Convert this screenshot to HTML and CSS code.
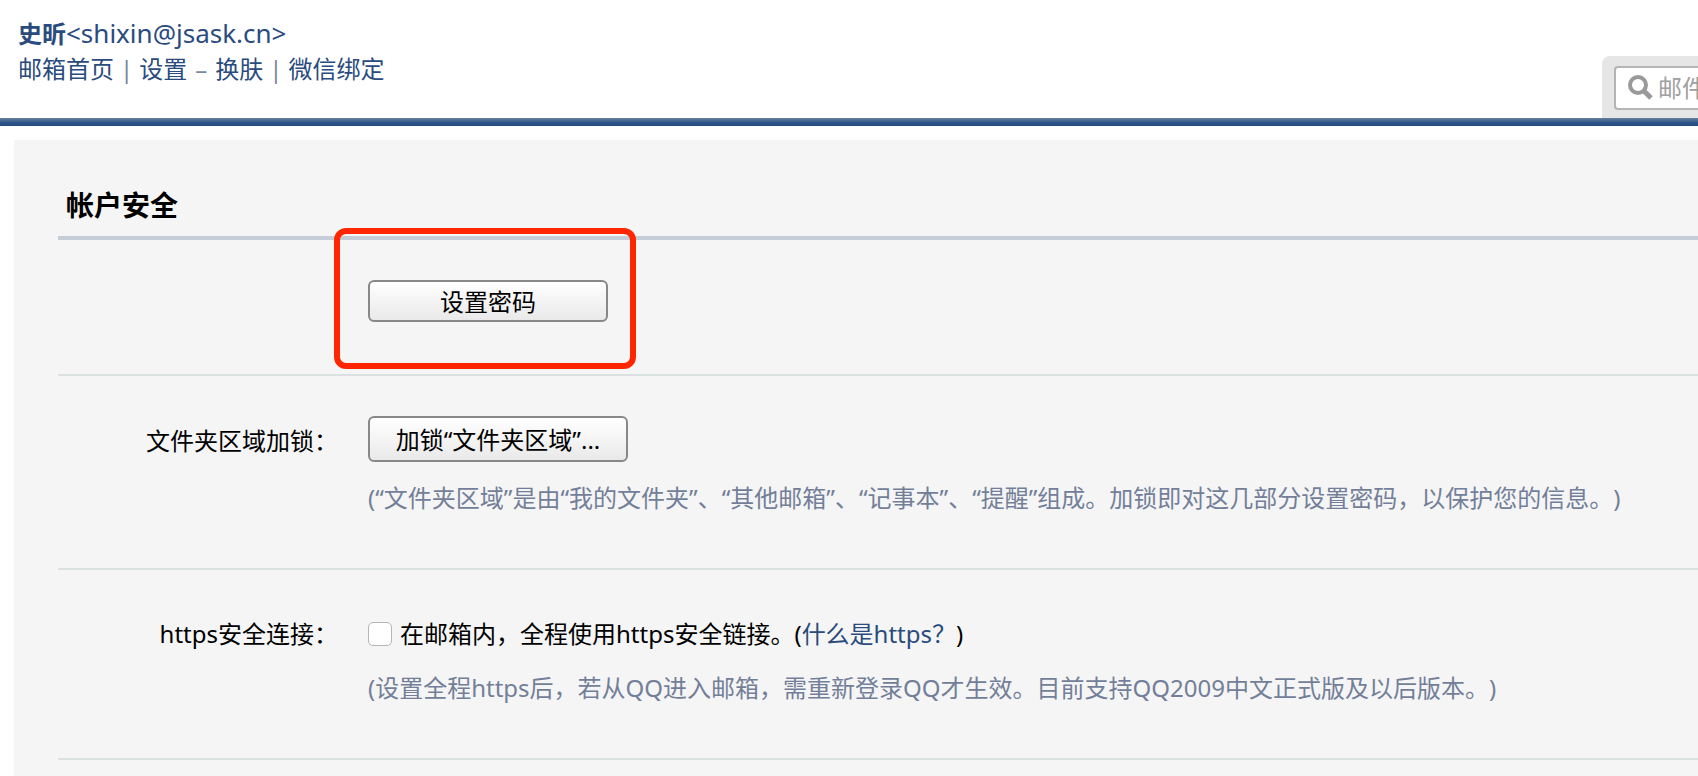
FILE: index.html
```
<!DOCTYPE html>
<html lang="zh-CN">
<head>
    <meta charset="UTF-8">
    <title>帐户安全</title>
    <link rel="stylesheet" href="styles.css">
</head>
<body>
    <header class="header">
        <div class="account">
            <div class="user"><b>史昕</b><span class="email">&lt;shixin@jsask.cn&gt;</span></div>
            <nav class="nav">
                <a href="#">邮箱首页</a>
                <span class="sep">|</span>
                <a href="#">设置</a>
                <span class="sep dash">–</span>
                <a href="#">换肤</a>
                <span class="sep">|</span>
                <a href="#">微信绑定</a>
            </nav>
        </div>
        <form class="search">
            <div class="search-box">
                <svg class="search-icon" width="26" height="26" viewBox="0 0 26 26">
                    <circle cx="10" cy="10" r="8" fill="none" stroke="#999" stroke-width="4"/>
                    <path d="M16 16L23 23" stroke="#999" stroke-width="5"/>
                </svg>
                <input type="text" class="search-input" placeholder="邮件" aria-label="邮件">
            </div>
        </form>
    </header>

    <main class="panel">
        <h1 class="title">帐户安全</h1>

        <section class="row">
            <div class="label"></div>
            <div class="content">
                <div class="marked">
                    <button type="button" class="btn btn-password">设置密码</button>
                </div>
            </div>
        </section>

        <section class="row">
            <div class="label">文件夹区域加锁：</div>
            <div class="content">
                <button type="button" class="btn btn-lock">加锁“文件夹区域”...</button>
                <p class="tip">(“文件夹区域”是由“我的文件夹”、“其他邮箱”、“记事本”、“提醒”组成。加锁即对这几部分设置密码，以保护您的信息。)</p>
            </div>
        </section>

        <section class="row row-https">
            <div class="label">https安全连接：</div>
            <div class="content">
                <div class="option">
                    <input type="checkbox" id="https" class="check">
                    <label for="https">在邮箱内，全程使用https安全链接。</label>(<a href="#">什么是https？</a>)
                </div>
                <p class="tip">(设置全程https后，若从QQ进入邮箱，需重新登录QQ才生效。目前支持QQ2009中文正式版及以后版本。)</p>
            </div>
        </section>
    </main>
</body>
</html>
```
FILE: styles.css
```
* {
    box-sizing: border-box;
}
body {
    margin: 0;
    font-family: "Noto Sans", "Noto Sans CJK SC", sans-serif;
    font-size: 24px;
    line-height: 36px;
    text-spacing-trim: space-all;
    color: #000;
    background: #fff;
    display: flex;
    flex-direction: column;
    min-height: 100vh;
}
a {
    color: #2a4b7d;
    text-decoration: none;
}

/* header */
.header {
    display: flex;
    justify-content: space-between;
    align-items: flex-end;
    position: relative;
    padding-bottom: 8px;
}
.header::after {
    content: "";
    position: absolute;
    left: 0;
    right: 0;
    bottom: 0;
    height: 8px;
    background: linear-gradient(#67809f, #2b5486 60%, #254d80);
}
.account {
    padding: 15px 0 31px 18px;
    color: #2a4b7d;
}
.user {
    height: 36px;
}
.email {
    font-size: 26px;
}
.nav {
    display: flex;
    gap: 6px;
}
.sep {
    color: #7a869f;
}
.dash {
    padding: 0 2px;
}
.search {
    padding: 10px 0 8px 12px;
    background: #e6e6e6;
    border-radius: 8px 0 0 0;
}
.search-box {
    display: flex;
    align-items: center;
    width: 84px;
    height: 44px;
    padding-left: 12px;
    border: 2px solid #b4b4b4;
    border-right: none;
    border-radius: 4px 0 0 4px;
    background: #fff;
}
.search-icon {
    flex: none;
}
.search-input {
    flex: 1;
    min-width: 0;
    padding: 0;
    margin-left: 4px;
    border: none;
    outline: none;
    background: none;
    font: inherit;
}
.search-input::placeholder {
    color: #a0a0a0;
}

/* settings */
.panel {
    flex: 1;
    margin: 14px 0 0 14px;
    padding: 40px 0 14px 44px;
    background: #f5f5f5;
}
.title {
    margin: 0;
    padding: 5px 8px 11px;
    font-size: 28px;
    line-height: 40px;
    font-weight: 600;
    border-bottom: 4px solid #c5cdd9;
}
.row {
    display: flex;
    gap: 30px;
    padding: 40px 0 52px;
    border-bottom: 2px solid #dbe0e0;
}
.label {
    width: 280px;
    padding-top: 7px;
    text-align: right;
}
.content {
    flex: 1;
}
.btn {
    display: block;
    padding: 2px 0 0;
    font: inherit;
    color: #000;
    border: 2px solid #888;
    border-radius: 6px;
    background: linear-gradient(#fff, #e9e9e9);
}
.btn-password {
    width: 240px;
    height: 42px;
}
.btn-lock {
    width: 260px;
    height: 46px;
}
.tip {
    margin: 18px 0 0;
    color: #737f99;
}

/* red frame round the password button */
.marked {
    position: relative;
    width: 240px;
}
.marked::before {
    content: "";
    position: absolute;
    top: -52px;
    left: -34px;
    right: -28px;
    bottom: -47px;
    border: 6px solid #ff2600;
    border-radius: 12px;
    pointer-events: none;
}

.row-https {
    padding-top: 46px;
}
.row-https .label {
    padding-top: 0;
}
.option {
    display: flex;
    align-items: center;
}
.check {
    appearance: none;
    width: 24px;
    height: 24px;
    margin: 0 8px 0 0;
    border: 1px solid #b5b5b5;
    border-radius: 5px;
    background: #fff;
}
```
